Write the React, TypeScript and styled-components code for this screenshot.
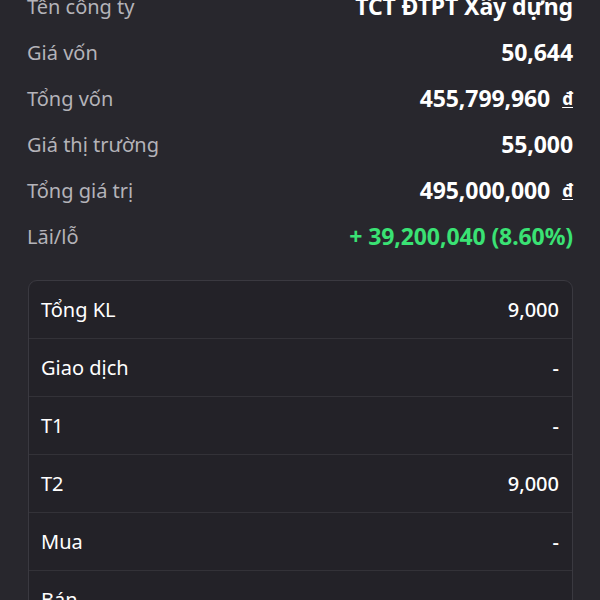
import React from 'react';
import styled, { createGlobalStyle } from 'styled-components';

const GlobalStyle = createGlobalStyle`
  html, body {
    margin: 0;
    padding: 0;
    background: #28272d;
    overflow: hidden;
  }
  body {
    font-family: "Noto Sans", "Open Sans", sans-serif;
    color: #ffffff;
  }
`;

const Page = styled.div`
  width: 600px;
  height: 600px;
  overflow: hidden;
  background: #28272d;
`;

// nội dung đã cuộn xuống một chút, nên dòng đầu bị cắt
const Scroller = styled.div`
  margin-top: -17px;
  padding: 0 27px 0 27px;
`;

const SummaryList = styled.div`
  display: flex;
  flex-direction: column;
`;

const SummaryRow = styled.div`
  display: flex;
  align-items: center;
  justify-content: space-between;
  height: 46px;
`;

const SummaryLabel = styled.span`
  font-size: 20px;
  color: #b4b3b9;
`;

const SummaryValue = styled.span<{ $tone?: 'up' | 'plain' }>`
  display: flex;
  align-items: center;
  font-size: 23px;
  font-weight: 700;
  letter-spacing: -0.1px;
  color: ${p => (p.$tone === 'up' ? '#3ae274' : '#ffffff')};
`;

const Currency = styled.span`
  font-size: 17px;
  font-weight: 700;
  margin-left: 12px;
  text-decoration: underline;
  text-underline-offset: 2px;
`;

const Card = styled.div`
  margin-top: 21px;
  margin-left: 1px;
  border: 1px solid #3a3940;
  border-radius: 9px;
  background: #232228;
  overflow: hidden;
`;

const CardRow = styled.div`
  display: flex;
  align-items: center;
  justify-content: space-between;
  height: 57px;
  padding: 0 13px 0 12px;
  border-bottom: 1px solid #333238;
  &:last-child {
    border-bottom: none;
  }
`;

const CardLabel = styled.span`
  font-size: 20px;
  color: #ffffff;
`;

const CardValue = styled.span`
  font-size: 20px;
  font-weight: 500;
  color: #ffffff;
`;

interface SummaryItem {
  label: string;
  value: string;
  currency?: boolean;
  tone?: 'up' | 'plain';
}

const summary: SummaryItem[] = [
  { label: 'Tên công ty', value: 'TCT ĐTPT Xây dựng' },
  { label: 'Giá vốn', value: '50,644' },
  { label: 'Tổng vốn', value: '455,799,960', currency: true },
  { label: 'Giá thị trường', value: '55,000' },
  { label: 'Tổng giá trị', value: '495,000,000', currency: true },
  { label: 'Lãi/lỗ', value: '+ 39,200,040 (8.60%)', tone: 'up' },
];

const volumes: [string, string][] = [
  ['Tổng KL', '9,000'],
  ['Giao dịch', '-'],
  ['T1', '-'],
  ['T2', '9,000'],
  ['Mua', '-'],
  ['Bán', '-'],
];

export default function App() {
  return (
    <Page>
      <GlobalStyle />
      <Scroller>
        <SummaryList>
          {summary.map(item => (
            <SummaryRow key={item.label}>
              <SummaryLabel>{item.label}</SummaryLabel>
              <SummaryValue $tone={item.tone}>
                {item.value}
                {item.currency && <Currency>đ</Currency>}
              </SummaryValue>
            </SummaryRow>
          ))}
        </SummaryList>

        <Card>
          {volumes.map(([label, value]) => (
            <CardRow key={label}>
              <CardLabel>{label}</CardLabel>
              <CardValue>{value}</CardValue>
            </CardRow>
          ))}
        </Card>
      </Scroller>
    </Page>
  );
}
